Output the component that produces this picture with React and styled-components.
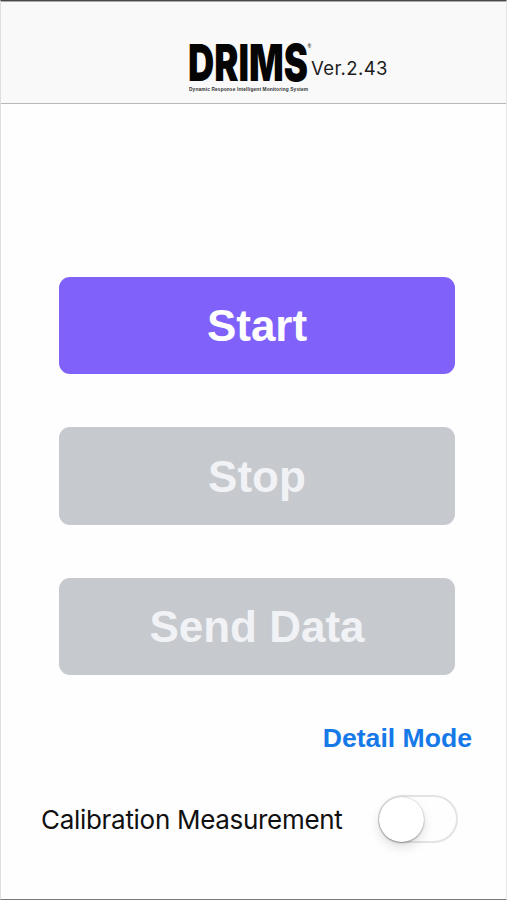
import React, { useState } from "react";
import styled, { createGlobalStyle } from "styled-components";

const App = () => {
  const [measuring, setMeasuring] = useState(false);
  const [calibration, setCalibration] = useState(false);

  return (
    <>
      <GlobalStyle />
      <Screen>
        <Header>
          <Logo />
          <Version>Ver.2.43</Version>
        </Header>
        <ButtonContainer>
          <ActionButton disabled={measuring} onClick={() => setMeasuring(true)}>
            Start
          </ActionButton>
          <ActionButton
            disabled={!measuring}
            onClick={() => setMeasuring(false)}
          >
            Stop
          </ActionButton>
          <ActionButton disabled>Send Data</ActionButton>
        </ButtonContainer>
        <DetailButton type="button">Detail Mode</DetailButton>
        <CalibrationRow>
          <CalibrationLabel>Calibration Measurement</CalibrationLabel>
          <Switch
            type="button"
            role="switch"
            aria-label="Calibration Measurement"
            aria-checked={calibration}
            $on={calibration}
            onClick={() => setCalibration(!calibration)}
          >
            <Knob $on={calibration} />
          </Switch>
        </CalibrationRow>
      </Screen>
    </>
  );
};

const Logo = () => (
  <LogoSvg viewBox="0 0 124 54">
    <LogoName
      x="0"
      y="41"
      textLength="120"
      lengthAdjust="spacingAndGlyphs"
    >
      DRIMS
    </LogoName>
    <LogoMark x="119.5" y="8">
      ®
    </LogoMark>
    <LogoCaption x="1" y="50.5" textLength="119">
      Dynamic Response Intelligent Monitoring System
    </LogoCaption>
  </LogoSvg>
);

export default App;

const GlobalStyle = createGlobalStyle`
  body {
    margin: 0;
    background-color: #fefefe;
  }
`;

const Screen = styled.div`
  box-sizing: border-box;
  width: 100%;
  height: 900px;
  border-top: 1px solid #484848;
  border-bottom: 1px solid #777;
  border-left: 1px solid #dedede;
  border-right: 1px solid #e6e6e6;
  display: flex;
  flex-direction: column;
  overflow: hidden;
`;

const Header = styled.header`
  box-sizing: border-box;
  height: 103px;
  flex-shrink: 0;
  padding: 38px 0 0 187px;
  border-top: 1px solid #aaa;
  border-bottom: 1px solid #b8b8b8;
  background-color: #f9f9f9;
  display: flex;
  align-items: flex-start;
`;

const LogoSvg = styled.svg`
  width: 124px;
  height: 54px;
  flex-shrink: 0;
  overflow: visible;
`;

const LogoName = styled.text`
  font-family: Inter, sans-serif;
  font-size: 51px;
  font-weight: 900;
  fill: #050505;
`;

const LogoMark = styled.text`
  font-family: "Liberation Sans", sans-serif;
  font-size: 5px;
  font-weight: 700;
  fill: #333;
`;

const LogoCaption = styled.text`
  font-family: "Liberation Sans Narrow", "Liberation Sans", sans-serif;
  font-size: 4.8px;
  font-weight: 700;
  fill: #333;
`;

const Version = styled.span`
  margin-top: 16px;
  margin-left: -1px;
  font-family: Inter, sans-serif;
  font-size: 18.5px;
  line-height: 25px;
  letter-spacing: 0.4px;
  color: #1c1c1c;
`;

const ButtonContainer = styled.div`
  padding: 172.5px 51px 0 58px;
  display: flex;
  flex-direction: column;
  gap: 53px;
`;

const ActionButton = styled.button`
  width: 100%;
  height: 97.5px;
  padding: 2px 0 0;
  border: none;
  border-radius: 11px;
  background-color: #8062fb;
  font-family: "Liberation Sans", sans-serif;
  font-size: 44px;
  font-weight: 700;
  color: #fff;
  cursor: pointer;

  &:disabled {
    background-color: #c6c9ce;
    color: #f1f2f5;
    cursor: default;
  }
`;

const DetailButton = styled.button`
  align-self: flex-end;
  margin: 47px 34px 0 0;
  padding: 0;
  border: none;
  background: none;
  font-family: "Liberation Sans", sans-serif;
  font-size: 26.6px;
  line-height: 32px;
  font-weight: 700;
  color: #1679e8;
  cursor: pointer;
`;

const CalibrationRow = styled.div`
  margin-top: 41px;
  padding: 0 48px 0 40px;
  display: flex;
  justify-content: space-between;
  align-items: center;
`;

const CalibrationLabel = styled.span`
  font-family: Inter, sans-serif;
  font-size: 26px;
  letter-spacing: -0.3px;
  white-space: nowrap;
  color: #101010;
`;

const Switch = styled.button`
  box-sizing: border-box;
  width: 80px;
  height: 48px;
  padding: 0;
  border: 2px solid ${({ $on }) => ($on ? "#4cd964" : "#e3e3e3")};
  border-radius: 24px;
  background-color: ${({ $on }) => ($on ? "#4cd964" : "#fefefe")};
  display: flex;
  align-items: center;
  justify-content: ${({ $on }) => ($on ? "flex-end" : "flex-start")};
  cursor: pointer;
`;

const Knob = styled.span`
  width: 45px;
  height: 45px;
  margin-left: -1px;
  border-radius: 50%;
  background-color: #fff;
  box-shadow: 0 0 1px rgba(0, 0, 0, 0.25), 0 1px 2px rgba(0, 0, 0, 0.3),
    0 5px 11px rgba(0, 0, 0, 0.13);
`;
